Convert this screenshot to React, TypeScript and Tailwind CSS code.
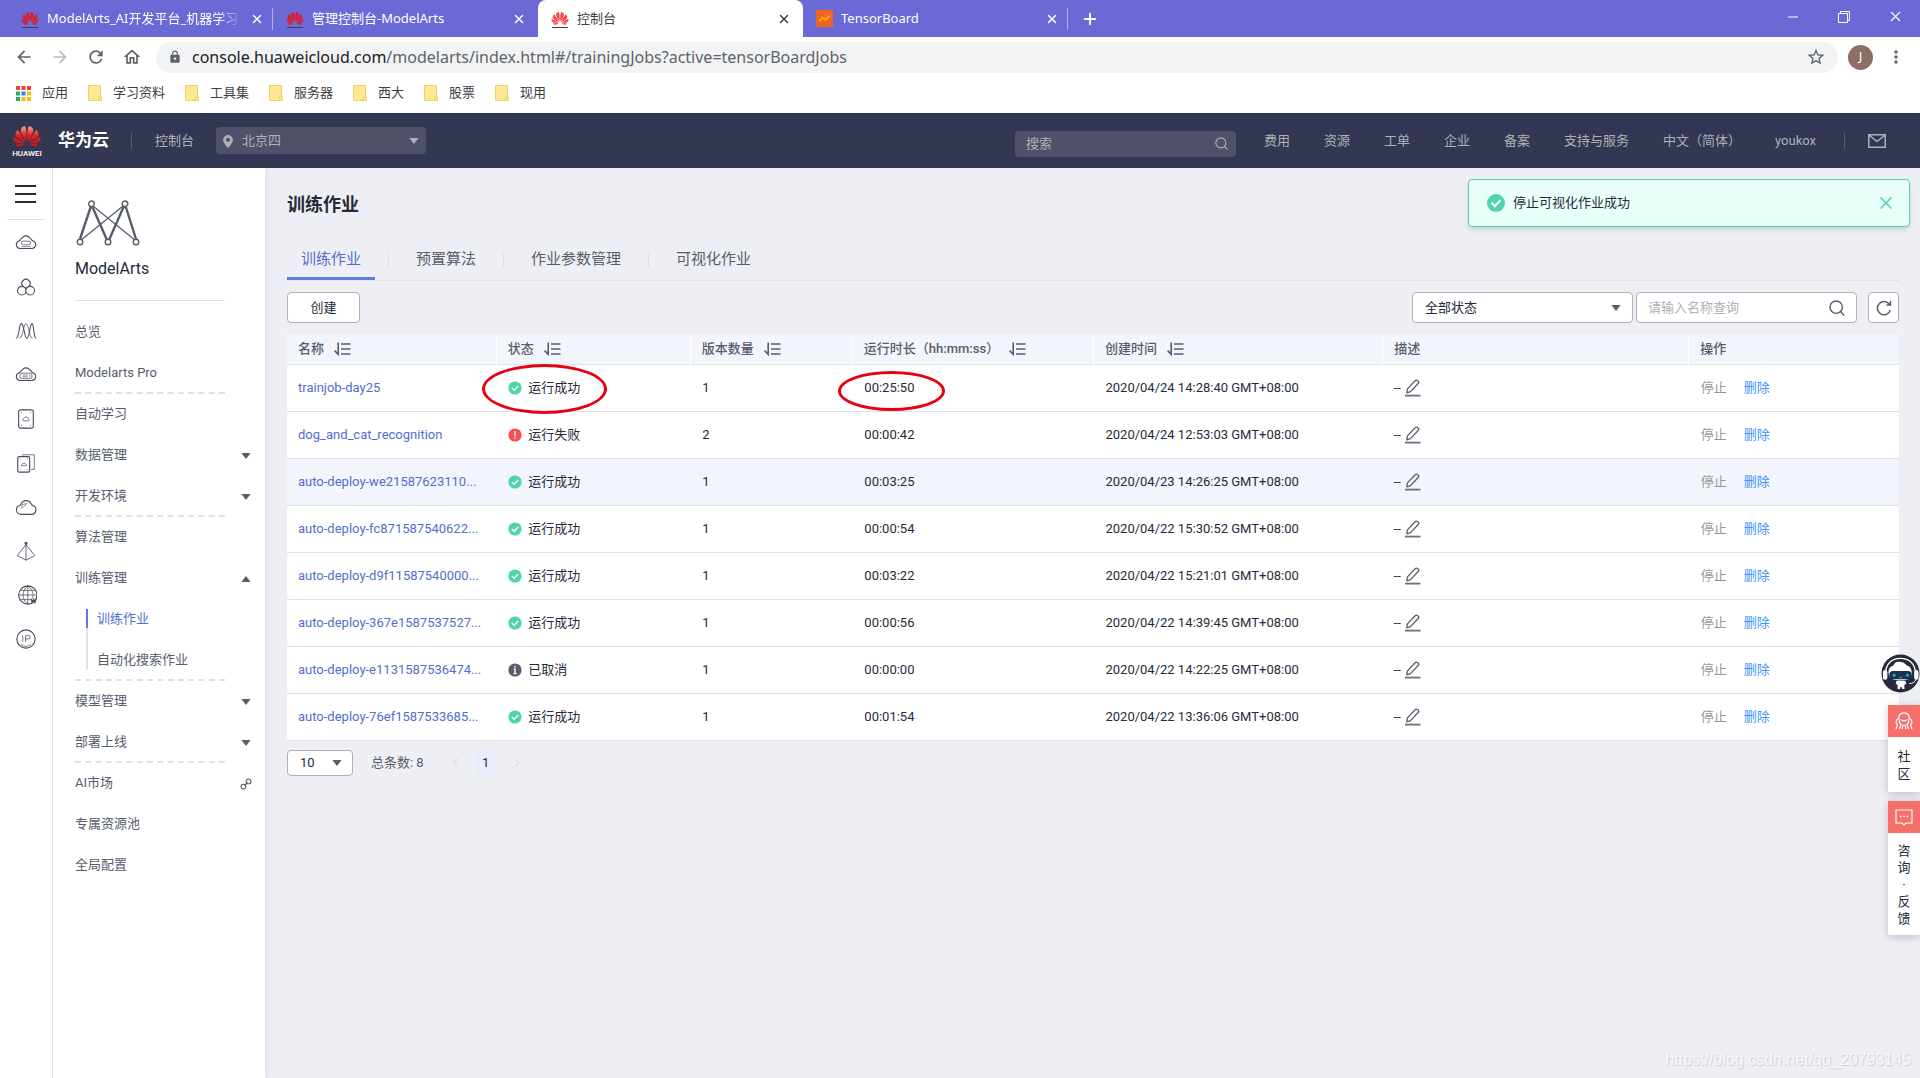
import type { ReactNode } from "react";
import {
  MdArrowBack,
  MdArrowForward,
  MdLock,
  MdMoreVert,
  MdOutlineHome,
  MdRefresh,
  MdStarBorder,
} from "react-icons/md";
import { SiHuawei } from "react-icons/si";
import { ChevronLeft, ChevronRight, Minus, Plus, X } from "lucide-react";

const browserTabs = [
  { title: "ModelArts_AI开发平台_机器学习", icon: "huawei", active: false, wide: true },
  { title: "管理控制台-ModelArts", icon: "huawei", active: false },
  { title: "控制台", icon: "huawei", active: true },
  { title: "TensorBoard", icon: "tensor", active: false },
];

const bookmarks = ["学习资料", "工具集", "服务器", "西大", "股票", "现用"];

const headerLinks = ["费用", "资源", "工单", "企业", "备案", "支持与服务", "中文（简体）", "youkox"];

const jobs = [
  { name: "trainjob-day25", status: "success", version: 1, duration: "00:25:50", created: "2020/04/24 14:28:40 GMT+08:00", marked: true },
  { name: "dog_and_cat_recognition", status: "failed", version: 2, duration: "00:00:42", created: "2020/04/24 12:53:03 GMT+08:00" },
  { name: "auto-deploy-we21587623110...", status: "success", version: 1, duration: "00:03:25", created: "2020/04/23 14:26:25 GMT+08:00", hovered: true },
  { name: "auto-deploy-fc871587540622...", status: "success", version: 1, duration: "00:00:54", created: "2020/04/22 15:30:52 GMT+08:00" },
  { name: "auto-deploy-d9f11587540000...", status: "success", version: 1, duration: "00:03:22", created: "2020/04/22 15:21:01 GMT+08:00" },
  { name: "auto-deploy-367e1587537527...", status: "success", version: 1, duration: "00:00:56", created: "2020/04/22 14:39:45 GMT+08:00" },
  { name: "auto-deploy-e1131587536474...", status: "cancelled", version: 1, duration: "00:00:00", created: "2020/04/22 14:22:25 GMT+08:00" },
  { name: "auto-deploy-76ef1587533685...", status: "success", version: 1, duration: "00:01:54", created: "2020/04/22 13:36:06 GMT+08:00" },
];

const statusText: Record<string, string> = {
  success: "运行成功",
  failed: "运行失败",
  cancelled: "已取消",
};

/* ---------- icons ---------- */

const Triangle = ({ up = false, className = "" }: { up?: boolean; className?: string }) => (
  <svg viewBox="0 0 10 6" className={`h-[6px] w-[10px] ${className}`} fill="currentColor">
    <path d={up ? "M5 0l4.6 6H.4z" : "M.4 0h9.2L5 6z"} />
  </svg>
);

const SearchIcon = ({ className = "" }: { className?: string }) => (
  <svg viewBox="0 0 16 16" className={className} fill="none" stroke="currentColor" strokeWidth="1.4">
    <circle cx="7.2" cy="7.2" r="6.2" />
    <path d="M11.6 11.6l3.6 3.8" />
  </svg>
);

const SortIcon = () => (
  <svg viewBox="0 0 17 14" className="h-[14px] w-[17px]" fill="none" stroke="#575d6c" strokeWidth="1.6">
    <path d="M4.2 .5v11.8L.6 8.6M7 2h9.5M7 7h9.5M7 12h9.5" />
  </svg>
);

const PencilIcon = () => (
  <svg viewBox="0 0 16 18" className="h-[18px] w-[16px]" fill="none" stroke="#575d6c" strokeWidth="1.3">
    <path d="M1.8 13.8l.6-3.9L10.4 1.5c1.2-1.2 4.3 1 3 2.7L5.5 12.6z" strokeLinejoin="round" />
    <path d="M0 16.6h15.5" strokeWidth="1.8" stroke="#6b707c" />
  </svg>
);

const StatusIcon = ({ status }: { status: string }) => (
  <svg viewBox="0 0 14 14" className="h-[14px] w-[14px]" fill="none" stroke="#fff" strokeWidth="1.4">
    {status === "success" && (
      <>
        <circle cx="7" cy="7" r="6.6" fill="#50d4ab" stroke="none" />
        <path d="M3.8 6.9l2.4 2.3 4-4.1" />
      </>
    )}
    {status === "failed" && (
      <>
        <circle cx="7" cy="7" r="6.6" fill="#fa4d4d" stroke="none" />
        <path d="M7 3v5.5M7 9.5v1.3" />
      </>
    )}
    {status === "cancelled" && (
      <>
        <circle cx="7" cy="7" r="6.6" fill="#575d6c" stroke="none" />
        <path d="M7 3v1.5M5.8 6.2H7v4.3M5.5 10.6h3" />
      </>
    )}
  </svg>
);

const ModelArtsLogo = () => (
  <svg viewBox="0 0 64 46" className="h-[46px] w-[64px]" fill="none" stroke="#575d6c">
    <path d="M15 6L4 39M16 6l15 34M48 6L33 40M49.500 6l10.500 33" strokeWidth="2.4" />
    <path d="M17 6l43 35M47 6L4 41" strokeWidth="1.2" />
    <g fill="#fff" strokeWidth="1.4">
      <circle cx="15.5" cy="3.8" r="2.8" />
      <circle cx="49" cy="3.8" r="2.8" />
      <circle cx="4" cy="42" r="2.8" />
      <circle cx="32" cy="42" r="2.8" />
      <circle cx="60" cy="42" r="2.8" />
    </g>
  </svg>
);

const LinkIcon = () => (
  <svg viewBox="0 0 12 12" className="h-3 w-3" fill="none" stroke="#575d6c" strokeWidth="1.1">
    <circle cx="8.6" cy="3.4" r="2.4" />
    <circle cx="3.4" cy="8.6" r="2.4" />
    <path d="M4.5 7.5l3-3" />
  </svg>
);

const cloud = "M5.500 18h13a4.300 4.300 0 001.300-8.300c-1-.3-1.300-.6-1.700-1.300-1.300-2-2-1.800-2.900-2.800a4.500 4.500 0 00-6.400 0C7.900 6.600 7.200 6.400 5.900 8.400c-.4.7-.7 1-1.700 1.300A4.300 4.300 0 005.500 18z";

const railIcons: ReactNode[] = [
  <>
    <path d={cloud} />
    <rect x="7" y="10" width="10" height="4" rx="2" strokeWidth=".8" />
    <path d="M7 16h10" strokeWidth=".7" />
  </>,
  <>
    <path d="M8.500 11a4.500 4.500 0 117 0v2h-7z" />
    <circle cx="7.500" cy="16" r="4.700" fill="#fff" />
    <circle cx="16.500" cy="16" r="4.700" fill="#fff" />
  </>,
  <>
    <path d="M1 20c4 0 3-16 6-16s3 16 6 16 3-16 5.500-16S20 20 23 20" />
    <path d="M5 20c3.500 0 4-16 7-16s3.500 16 7 16" strokeWidth=".8" />
  </>,
  <>
    <path d={cloud} />
    <rect x="5.500" y="10" width="13" height="6" rx="2" strokeWidth=".8" />
    <path d="M8 12h6M8 14h6M16 11.500v3" strokeWidth=".7" />
  </>,
  <>
    <rect x="4" y="2" width="16" height="20" rx="2" />
    <path d="M6.500 5h1M16.500 5h1M6.500 19h1M16.500 19h1M9 14h6c1.200-1.500 0-2.800-1-2.800-.6-2-3.400-2-4 0-1 0-2.200 1.300-1 2.800z" strokeWidth=".8" />
  </>,
  <>
    <rect x="3" y="5" width="13" height="17" rx="1.5" />
    <path d="M8 4V3h13v16h-3.500" strokeWidth=".8" />
    <path d="M5 7.500h1M13 7.500h1M5 19h1M13 19h1M7 15h5.500c.5-1-.2-1.800-1-1.800-.5-1.500-2.900-1.500-3.200 0-.8 0-1.800.8-1.300 1.800z" strokeWidth=".7" />
  </>,
  <>
    <path d="M6 20h12a5 5 0 001.200-9.800c-1-.2-1.200-.8-1.500-1.500a6 6 0 00-11-.1c-.4.900-.8 1.400-1.700 1.700A5 5 0 006 20z" />
    <path d="M7.500 14V9.500l5-1.300-3.500 4.200" strokeWidth=".7" />
  </>,
  <>
    <circle cx="12" cy="3.500" r="1.100" fill="#252b3a" />
    <path d="M12 5L2.500 17 12 22l9.500-5zM12 5v17" strokeWidth=".9" />
  </>,
  <>
    <circle cx="14" cy="12" r="10" />
    <path d="M14 2c-7 5-7 15 0 20M14 2c6 5 6.500 10 5 14M14 2v20M4 12h20M6 7h16M6 17h11" strokeWidth=".8" />
    <path d="M17.500 16l1.200 4 1.500-3 1.500 3 1.200-4" strokeWidth="1.5" />
  </>,
  <>
    <circle cx="12" cy="12" r="10" />
    <path d="M8.500 8v7M11.500 15V8h3a2 2 0 010 4h-3M6.500 18c3.300 2.500 7.700 2.500 11 0" strokeWidth=".8" />
  </>,
];

const Robot = () => (
  <svg viewBox="0 0 40 40" className="h-[39px] w-[39px]">
    <circle cx="20" cy="20" r="19.5" fill="#252b3a" />
    <path d="M4.500 20C5 10 11 4.500 20 4.500S35 10 35.500 20" fill="none" stroke="#fff" strokeWidth="1.3" />
    <path d="M8 21c-1-5 1-8.500 4.500-9 1-3 3.500-4.500 7-4s4.500 1 6.500 3.500c4 .8 6 4.500 5.500 9.500-1 5-5 6-11.500 6S9 26 8 21z" fill="#fff" />
    <rect x="8.500" y="17.500" width="23" height="8.500" rx="4" fill="#16344c" />
    <circle cx="13.5" cy="21.7" r="1.600" fill="#2f9fb8" />
    <circle cx="27" cy="21.7" r="1.600" fill="#2f9fb8" />
    <path d="M18.500 24h3.500" stroke="#2f9fb8" />
    <rect x="2" y="16.500" width="4.500" height="10" rx="2.200" fill="#fff" />
    <rect x="34" y="16.500" width="4.500" height="10" rx="2.200" fill="#fff" />
    <path d="M16 27.500h9l1 3-2 1v4.500h-2.500v-2h-2v2H17v-4.500l-2-1z" fill="#fff" />
    <path d="M36 26c-1 3-3.500 4-7 4.500" fill="none" stroke="#fff" />
  </svg>
);

/* ---------- browser chrome ---------- */

const Favicon = ({ icon, active }: { icon: string; active: boolean }) =>
  icon === "huawei" ? (
    <span className="flex w-[18px] shrink-0 flex-col items-center">
      <SiHuawei className={`h-[17px] w-[18px] ${active ? "text-[#f5484f]" : "text-[#d81e2c]"}`} />
      <span className="h-px w-4 bg-[#4a3a4a]" />
    </span>
  ) : (
    <svg viewBox="0 0 18 18" className="h-[17px] w-[17px] shrink-0">
      <rect width="18" height="18" fill="#f16522" />
      <path d="M3.5 12l3.500-4 3 2.500L14.500 6" fill="none" stroke="#ffb31a" strokeWidth="1.8" />
    </svg>
  );

const BrowserTabs = () => (
  <div className="flex h-[37px] items-stretch bg-[#6b69d6] pl-2">
    {browserTabs.map((tab, i) => (
      <div
        key={tab.title}
        className={`flex w-[265px] items-center gap-2 pr-3 pl-[13px] ${
          tab.active ? "rounded-t-lg bg-white text-[#3c4043]" : "text-white"
        }`}
      >
        <Favicon icon={tab.icon} active={tab.active} />
        <span
          className={`min-w-0 flex-1 overflow-hidden text-[13px] whitespace-nowrap ${
            tab.wide ? "[mask-image:linear-gradient(90deg,#000_88%,transparent)]" : ""
          }`}
        >
          {tab.title}
        </span>
        <button aria-label="关闭标签页" className="shrink-0">
          <X size={14} strokeWidth={2.5} />
        </button>
        {(i === 0 || i === 3) && <span className="-mr-3 h-[22px] w-px bg-[#b3b2ea]" />}
      </div>
    ))}
    <button aria-label="新标签页" className="ml-[13px] text-white">
      <Plus size={18} strokeWidth={2.5} />
    </button>
    <div className="ml-auto flex items-center gap-[35px] pr-4 pb-1 text-white">
      <button aria-label="最小化">
        <Minus size={16} strokeWidth={1.5} />
      </button>
      <button aria-label="还原">
        <svg viewBox="0 0 12 12" className="mx-[2px] h-3 w-3" fill="none" stroke="currentColor">
          <path d="M.5 2.500h9v9h-9zM2.500 2.500v-2h9v9h-2" />
        </svg>
      </button>
      <button aria-label="关闭">
        <X size={17} strokeWidth={1.5} />
      </button>
    </div>
  </div>
);

const AddressBar = () => (
  <div className="flex h-[39px] items-center bg-white pt-px pr-[14px] pl-[14px] text-[#5f6368]">
    <div className="flex gap-4">
      <button aria-label="后退"><MdArrowBack size={20} /></button>
      <button aria-label="前进" className="text-[#babcbe]"><MdArrowForward size={20} /></button>
      <button aria-label="重新加载"><MdRefresh size={20} /></button>
      <button aria-label="主页"><MdOutlineHome size={20} /></button>
    </div>
    <div className="ml-[14px] flex h-[31px] flex-1 items-center rounded-full bg-[#f1f3f4] pr-3 pl-3 text-[16px]">
      <MdLock size={14} />
      <label htmlFor="url" className="ml-[10px] text-[#202124]">console.huaweicloud.com</label>
      <input
        id="url"
        className="min-w-0 flex-1 bg-transparent outline-none"
        defaultValue="/modelarts/index.html#/trainingJobs?active=tensorBoardJobs"
      />
      <button aria-label="收藏"><MdStarBorder size={20} /></button>
    </div>
    <button className="ml-[10px] flex h-[25px] w-[25px] items-center justify-center rounded-full bg-[#8d6e63] text-[13px] text-white">
      J
    </button>
    <button aria-label="菜单" className="ml-[13px]"><MdMoreVert size={20} /></button>
  </div>
);

const BookmarkBar = () => (
  <div className="flex h-[37px] items-center gap-5 bg-white pb-[3px] pl-4 text-[13px] text-[#3c4043]">
    <a href="#apps" className="flex items-center gap-[11px]">
      <svg viewBox="0 0 15 15" className="h-[15px] w-[15px]">
        <path d="M0 0h4v4H0zM5.500 0h4v4h-4zM11 0h4v4h-4z" fill="#ea4335" />
        <path d="M0 5.500h4v4H0z" fill="#34a853" />
        <path d="M5.500 5.500h4v4h-4z" fill="#1a8cff" />
        <path d="M11 5.500h4v4h-4zM5.500 11h4v4h-4zM11 11h4v4h-4z" fill="#fbbc05" />
        <path d="M0 11h4v4H0z" fill="#34a853" />
      </svg>
      应用
    </a>
    {bookmarks.map((name) => (
      <a key={name} href="#bookmark" className="flex items-center gap-[11px]">
        <svg viewBox="0 0 14 16" className="h-4 w-[14px]">
          <path d="M.5.500h12v11.500h1v3.500H.5z" fill="#ffe793" stroke="#f0d264" />
          <path d="M10.500 15v-3h2" fill="none" stroke="#f0d264" />
        </svg>
        {name}
      </a>
    ))}
  </div>
);

/* ---------- console ---------- */

const ConsoleHeader = () => (
  <header className="flex h-[55px] items-center bg-[#343754] text-[13px] text-[#adb0b8]">
    <a href="#home" className="ml-3 flex items-center gap-4 text-white">
      <span className="flex w-[30px] flex-col items-center">
        <svg width="0" height="0" className="absolute">
          <linearGradient id="petal" x1="0" y1="0" x2="0" y2="1">
            <stop offset="0" stopColor="#f7a58f" />
            <stop offset=".45" stopColor="#e2231a" />
            <stop offset="1" stopColor="#c5161d" />
          </linearGradient>
        </svg>
        <SiHuawei fill="url(#petal)" className="h-[27px] w-[28px]" />
        <span className="text-[8px] leading-[8px] font-medium">HUAWEI</span>
      </span>
      <span className="text-[17px] font-bold">华为云</span>
    </a>
    <span className="ml-[22px] h-4 w-px bg-[#575d6c]" />
    <a href="#console" className="ml-[23px]">控制台</a>
    <div className="relative ml-[22px]">
      <svg viewBox="0 0 12 14" className="pointer-events-none absolute top-[8px] left-[6px] h-[13px] w-3" fill="#adb0b8">
        <path fillRule="evenodd" d="M6 0a5.200 5.200 0 015.200 5.200C11.200 9 6 14 6 14S.8 9 .8 5.200A5.200 5.200 0 016 0zm0 3a2.200 2.200 0 100 4.400A2.200 2.200 0 006 3z" />
      </svg>
      <select aria-label="区域" className="h-[27px] w-[210px] appearance-none rounded-sm bg-[#4e5169] pl-[26px] outline-none">
        <option>北京四</option>
      </select>
      <Triangle className="pointer-events-none absolute top-[11px] right-[7px]" />
    </div>
    <div className="mt-[6px] ml-auto flex h-[26px] w-[221px] items-center rounded-sm bg-[#4e5169] pr-2 pl-[11px]">
      <input aria-label="搜索" placeholder="搜索" className="min-w-0 flex-1 outline-none placeholder:text-[#adb0b8]" />
      <button aria-label="搜索按钮"><SearchIcon className="h-[13px] w-[13px]" /></button>
    </div>
    <nav className="ml-7 flex">
      {headerLinks.map((link) => (
        <a key={link} href="#nav" className="mr-[34px]">{link}</a>
      ))}
    </nav>
    <span className="-ml-[6px] h-4 w-px bg-[#575d6c]" />
    <button aria-label="消息" className="mr-[34px] ml-[23px]">
      <svg viewBox="0 0 18 14" className="h-[14px] w-[18px]" fill="none" stroke="currentColor" strokeWidth="1.5">
        <path d="M.8.800h16.400v12.400H.8zM1.500 1.500L9 7.500l7.500-6" />
      </svg>
    </button>
  </header>
);

const IconRail = () => (
  <nav className="flex w-[53px] shrink-0 flex-col items-center border-r border-[#dfe1e6] bg-white pr-px">
    <button aria-label="服务列表" className="flex h-[51px] flex-col justify-center gap-[6px]">
      <span className="h-[2px] w-[21px] bg-[#252b3a]" />
      <span className="h-[2px] w-[21px] bg-[#252b3a]" />
      <span className="h-[2px] w-[21px] bg-[#252b3a]" />
    </button>
    <span className="mb-px h-px w-[38px] bg-[#dfe1e6]" />
    {railIcons.map((icon, i) => (
      <a key={i} href="#service" className="flex h-[44px] items-center">
        <svg viewBox="0 0 24 24" className="h-[22px] w-[22px]" fill="none" stroke="#474c5b" strokeWidth="1.2">
          {icon}
        </svg>
      </a>
    ))}
  </nav>
);

const MenuItem = ({ label, end, dashed }: { label: string; end?: ReactNode; dashed?: boolean }) => (
  <li className="flex h-[41px] items-center">
    <a
      href="#menu"
      className={`flex h-full w-[150px] items-center border-b-2 ${
        dashed ? "border-dashed border-[#dfe1e6]" : "border-transparent"
      }`}
    >
      {label}
    </a>
    {end && <span className="ml-[15px] flex w-3 justify-center">{end}</span>}
  </li>
);

const Sidebar = () => (
  <aside className="z-10 w-[212px] shrink-0 bg-white pl-[22px] text-[13px] text-[#575d6c] shadow-[2px_0_6px_rgba(0,0,0,0.06)]">
    <div className="mt-8 ml-px">
      <ModelArtsLogo />
    </div>
    <h2 className="mt-3 text-[16px] leading-[22px] text-[#252b3a]">ModelArts</h2>
    <hr className="mt-5 mb-[11px] w-[150px] border-[#dfe1e6]" />
    <ul>
      <MenuItem label="总览" />
      <MenuItem label="Modelarts Pro" dashed />
      <MenuItem label="自动学习" />
      <MenuItem label="数据管理" end={<Triangle />} />
      <MenuItem label="开发环境" end={<Triangle />} dashed />
      <MenuItem label="算法管理" />
      <MenuItem label="训练管理" end={<Triangle up />} />
      <li className="flex h-[82px] w-[150px] items-center border-b-2 border-dashed border-[#dfe1e6] pl-[11px]">
        <div className="h-[60px] w-[2px] bg-[#dfe1e6]">
          <div className="h-[19px] bg-[#5e7ce0]" />
        </div>
        <div className="ml-[9px] flex flex-col leading-[41px]">
          <a href="#training" className="text-[#526ecc]">训练作业</a>
          <a href="#search-jobs">自动化搜索作业</a>
        </div>
      </li>
      <MenuItem label="模型管理" end={<Triangle />} />
      <MenuItem label="部署上线" end={<Triangle />} dashed />
      <MenuItem label="AI市场" end={<LinkIcon />} />
      <MenuItem label="专属资源池" />
      <MenuItem label="全局配置" />
    </ul>
  </aside>
);

const PageTabs = () => {
  const tabs = ["训练作业", "预置算法", "作业参数管理", "可视化作业"];
  return (
    <nav className="mt-6 flex h-10 items-stretch border-b border-[#dfe1e6] text-[15px]">
      {tabs.map((tab, i) => (
        <div key={tab} className="flex items-center">
          {i > 0 && <span className="mx-[13px] h-[15px] w-px bg-[#dfe1e6]" />}
          <a
            href="#tab"
            className={`flex h-full items-center border-b-[3px] px-[14px] ${
              i === 0 ? "border-[#5e7ce0] text-[#526ecc]" : "border-transparent text-[#575d6c]"
            }`}
          >
            {tab}
          </a>
        </div>
      ))}
    </nav>
  );
};

const Toolbar = () => (
  <div className="mt-[11px] flex h-[31px] items-stretch">
    <button className="w-[73px] rounded-sm border border-[#adb0b8] bg-white">创建</button>
    <div className="relative ml-auto">
      <select aria-label="状态" className="h-full w-[221px] appearance-none rounded-sm border border-[#adb0b8] bg-white pl-3 outline-none">
        <option>全部状态</option>
      </select>
      <Triangle className="pointer-events-none absolute top-[13px] right-3 text-[#575d6c]" />
    </div>
    <div className="ml-[3px] flex w-[221px] items-center rounded-sm border border-[#adb0b8] bg-white pr-[11px] pl-[11px]">
      <input aria-label="名称查询" placeholder="请输入名称查询" className="min-w-0 flex-1 outline-none placeholder:text-[#adb0b8]" />
      <button aria-label="查询" className="text-[#575d6c]"><SearchIcon className="h-4 w-4" /></button>
    </div>
    <button aria-label="刷新" className="ml-[11px] flex w-[31px] items-center justify-center rounded-sm border border-[#adb0b8] bg-white">
      <svg viewBox="0 0 16 16" className="h-4 w-4" fill="none" stroke="#575d6c" strokeWidth="1.5">
        <path d="M14.300 10.200A6.600 6.600 0 1113.500 4.500M14.500 1v4h-4" />
      </svg>
    </button>
  </div>
);

const HeadCell = ({ label, sort = true }: { label: string; sort?: boolean }) => (
  <th className="border-l border-white px-[11px] text-left font-medium text-[#575d6c] first:border-l-0">
    <span className="flex items-center gap-[10px]">
      {label}
      {sort && <SortIcon />}
    </span>
  </th>
);

const JobTable = () => (
  <table className="mt-[11px] w-full table-fixed border-collapse">
    <colgroup>
      <col className="w-[209px]" />
      <col className="w-[194px]" />
      <col className="w-[162px]" />
      <col className="w-[241px]" />
      <col className="w-[289px]" />
      <col className="w-[306px]" />
      <col className="w-[210px]" />
    </colgroup>
    <thead>
      <tr className="h-[30px] border-b border-[#dfe1e6] bg-[#f2f5fc]">
        <HeadCell label="名称" />
        <HeadCell label="状态" />
        <HeadCell label="版本数量" />
        <HeadCell label="运行时长（hh:mm:ss）" />
        <HeadCell label="创建时间" />
        <HeadCell label="描述" sort={false} />
        <HeadCell label="操作" sort={false} />
      </tr>
    </thead>
    <tbody>
      {jobs.map((job) => (
        <tr key={job.name} className={`h-[47px] border-b border-[#dfe1e6] ${job.hovered ? "bg-[#f2f5fc]" : "bg-white"}`}>
          <td className="px-[11px] whitespace-nowrap">
            <a href="#job" className="text-[#526ecc]">{job.name}</a>
          </td>
          <td className="relative px-3">
            <span className="flex items-center gap-[6px]">
              <StatusIcon status={job.status} />
              {statusText[job.status]}
            </span>
            {job.marked && (
              <span className="absolute -top-px -left-[14px] h-[50px] w-[125px] rounded-[50%] border-[3px] border-[#e60012]" />
            )}
          </td>
          <td className="px-3">{job.version}</td>
          <td className="relative px-3">
            {job.duration}
            {job.marked && (
              <span className="absolute top-[6px] -left-[14px] h-10 w-[107px] rounded-[50%] border-[3px] border-[#e60012]" />
            )}
          </td>
          <td className="px-3 whitespace-nowrap">{job.created}</td>
          <td className="px-[11px]">
            <span className="flex items-center gap-1">
              --
              <button aria-label="编辑描述"><PencilIcon /></button>
            </span>
          </td>
          <td className="px-3">
            <span className="flex gap-[17px]">
              <button className="text-[#979797]" disabled>停止</button>
              <button className="text-[#3d94ff]">删除</button>
            </span>
          </td>
        </tr>
      ))}
    </tbody>
  </table>
);

const Pagination = () => (
  <div className="mt-[9px] flex h-[26px] items-center">
    <div className="relative h-full">
      <select aria-label="每页条数" className="h-full w-[66px] appearance-none rounded-sm border border-[#adb0b8] bg-white pl-3 outline-none">
        <option>10</option>
      </select>
      <Triangle className="pointer-events-none absolute top-[10px] right-[11px] text-[#575d6c]" />
    </div>
    <span className="ml-[18px] text-[#575d6c]">总条数: 8</span>
    <button aria-label="上一页" className="ml-[23px] text-[#dfe1e6]"><ChevronLeft size={16} /></button>
    <button className="ml-[13px] h-full w-5 bg-[#e9edfa]">1</button>
    <button aria-label="下一页" className="ml-[13px] text-[#dfe1e6]"><ChevronRight size={16} /></button>
  </div>
);

const Notification = () => (
  <div
    role="status"
    className="absolute top-[11px] right-[10px] z-20 flex h-12 w-[442px] items-center rounded-sm border border-[#50d4ab] bg-[#e9fffa] pr-[13px] pl-[18px] shadow-md"
  >
    <svg viewBox="0 0 18 18" className="h-[18px] w-[18px]">
      <circle cx="9" cy="9" r="9" fill="#50d4ab" />
      <path d="M4.500 8.800l3.300 3.400 5.600-6" fill="none" stroke="#fff" strokeWidth="2.2" />
    </svg>
    <span className="ml-2">停止可视化作业成功</span>
    <button aria-label="关闭通知" className="ml-auto text-[#50d4ab]"><X size={20} /></button>
  </div>
);

const FloatButton = ({ label, height, children }: { label: string; height: string; children: ReactNode }) => (
  <a href="#support" className={`flex w-8 flex-col items-center bg-white shadow-[0_2px_10px_rgba(0,0,0,0.2)] ${height}`}>
    <span className="flex h-8 w-full shrink-0 items-center justify-center bg-[#f66f6a]">
      <svg viewBox="0 0 18 18" className="h-[18px] w-[18px]" fill="none" stroke="#fff" strokeWidth="1.2">
        {children}
      </svg>
    </span>
    <span className="my-auto w-[13px] text-center leading-[17px] break-all">{label}</span>
  </a>
);

const FloatTools = () => (
  <div className="absolute top-[486px] right-0 z-20 flex flex-col items-end">
    <button aria-label="智能客服"><Robot /></button>
    <div className="mt-3 flex flex-col gap-[9px]">
      <FloatButton label="社区" height="h-[87px]">
        <path d="M4.500 8.500C2.500 4 5.500.800 9 .800S15.500 4 13.500 8.500M6.200 7.500c1.500 2.200 4.100 2.200 5.600 0" />
        <path d="M3.300 6.500C.5 8 .3 11 2.500 12.500L1 17M4.500 8.500c-.5 2 .5 3 1.500 3.500L4.500 17M8 12.500L7 17M14.700 6.500c2.800 1.500 3 4.500.8 6L17 17M13.500 8.500c.5 2-.5 3-1.500 3.500l1.500 5M10 12.500l1 4.500" />
      </FloatButton>
      <FloatButton label="咨询·反馈" height="h-[134px]">
        <path d="M1 2h16v13h-6l-2 2-2-2H1z" />
        <path d="M5 8.500h1.500M8.300 8.500h1.500M11.600 8.500h1.500" strokeWidth="1.500" />
      </FloatButton>
    </div>
  </div>
);

export default function App() {
  return (
    <div className="flex min-h-screen flex-col bg-[#eeeff5] font-[Roboto,'Noto_Sans_CJK_SC',sans-serif] text-[13px] text-[#252b3a]">
      <div className="font-['Noto_Sans','Noto_Sans_CJK_SC',sans-serif]">
        <BrowserTabs />
        <AddressBar />
        <BookmarkBar />
      </div>
      <ConsoleHeader />
      <div className="relative flex flex-1">
        <IconRail />
        <Sidebar />
        <main className="min-w-0 flex-1 pr-[21px] pl-[22px]">
          <h1 className="mt-[25px] text-[18px] leading-[24px] font-bold">训练作业</h1>
          <PageTabs />
          <Toolbar />
          <JobTable />
          <Pagination />
        </main>
        <Notification />
        <FloatTools />
        <span className="absolute right-[9px] bottom-[6px] font-['Liberation_Sans',sans-serif] text-[16px] text-[#f6f7fa] [text-shadow:1px_1px_1px_#c9cbd3]">
          https://blog.csdn.net/qq_20793145
        </span>
      </div>
    </div>
  );
}
